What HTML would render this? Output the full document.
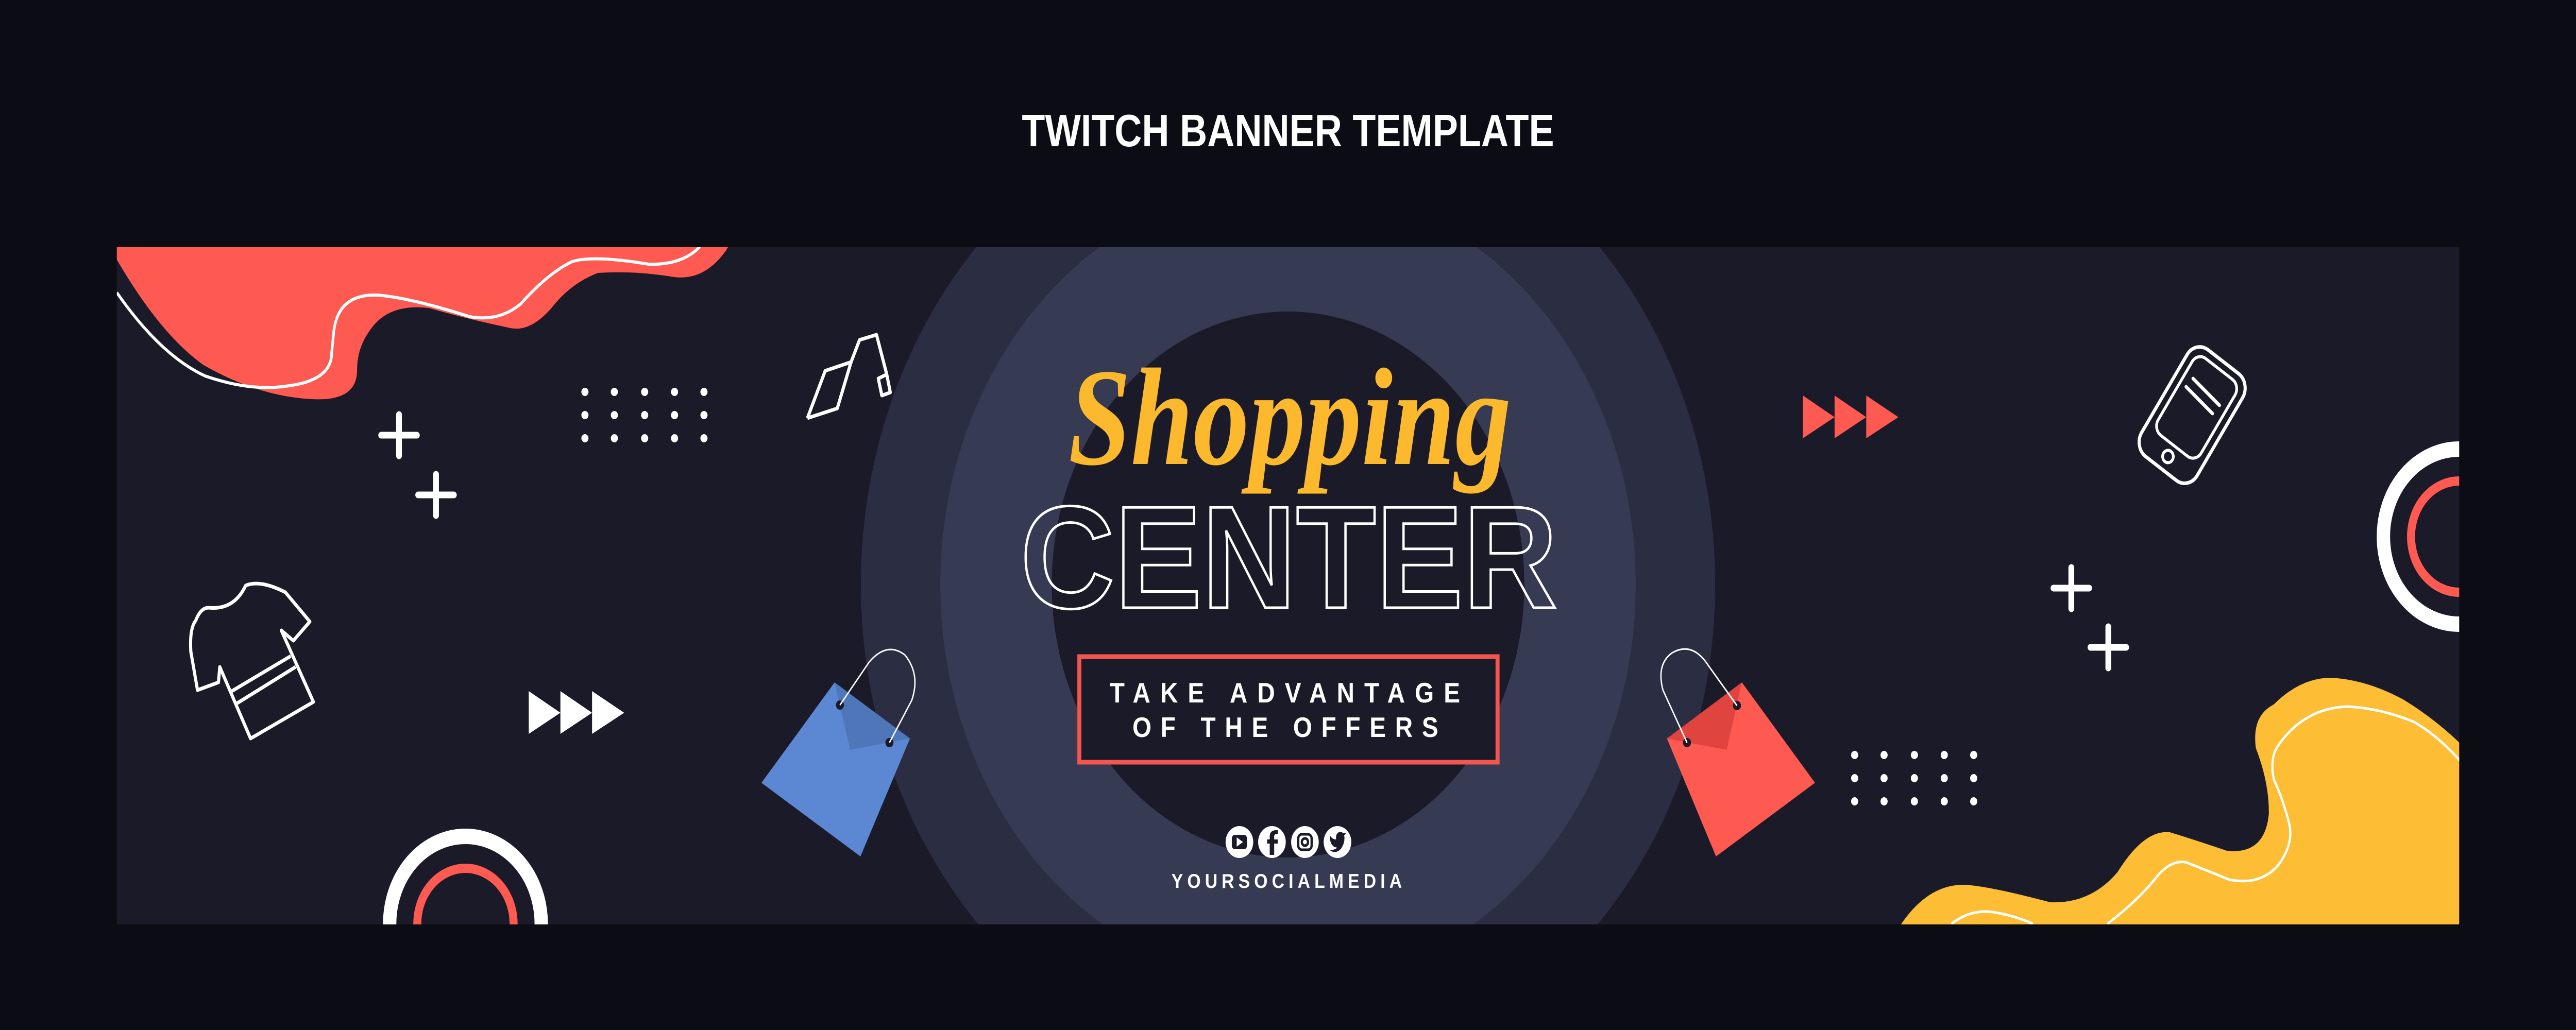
<!DOCTYPE html>
<html><head><meta charset="utf-8"><style>html,body{margin:0;padding:0;background:#0b0c14;overflow:hidden;width:100%;height:100%}svg{display:block;width:100vw;height:100vh}</style></head><body>
<svg viewBox="0 0 5778 2000" preserveAspectRatio="none" xmlns="http://www.w3.org/2000/svg">
<defs><clipPath id="b"><rect x="262" y="480" width="5254" height="1315"/></clipPath></defs>
<rect width="5778" height="2000" fill="#0b0c14"/>
<text x="2889" y="284" text-anchor="middle" font-family="Liberation Sans, sans-serif" font-weight="bold" font-size="88" fill="#fff" textLength="1194" lengthAdjust="spacingAndGlyphs">TWITCH BANNER TEMPLATE</text>
<rect x="262" y="480" width="5254" height="1315" fill="#1b1a28"/>
<g clip-path="url(#b)">
<circle cx="2889" cy="1135" r="958" fill="#2b2e42"/>
<circle cx="2889" cy="1135" r="780" fill="#363a52"/>
<circle cx="2889" cy="1135" r="530" fill="#1b1a28"/>
<path d="M250,470 L1640,470 L1628,487 Q1580,545 1513,538 Q1420,525 1341,530 Q1280,550 1237,598 Q1190,645 1145,637 Q1050,620 962,598 Q880,590 840,630 Q800,670 801,720 Q800,780 700,775 Q580,770 457,709 Q360,650 262,504 Z" fill="#fe5a52"/>
<path d="M262,568 Q360,690 460,730 Q560,760 640,750 Q745,740 744,684 L749,641 Q760,570 847,573 Q920,578 1054,615 Q1120,625 1168,590 Q1230,530 1283,508 Q1330,495 1455,513 Q1530,515 1570,479" fill="none" stroke="#fff" stroke-width="6"/>
<path d="M4260,1800 Q4320,1720 4400,1718 Q4450,1718 4599,1752 Q4690,1755 4750,1693 Q4810,1610 4867,1616 Q4920,1630 4995,1652 Q5080,1660 5089,1581 Q5090,1520 5060,1453 Q5050,1390 5100,1368 Q5160,1316 5229,1316 Q5310,1320 5392,1359 Q5460,1395 5520,1445 L5520,1800 Z" fill="#fdbd35"/>
<path d="M4377,1794 Q4420,1765 4470,1771 Q4520,1778 4560,1794" fill="none" stroke="#fff" stroke-width="5"/>
<path d="M4727,1794 Q4800,1745 4840,1700 Q4870,1670 4902,1674 Q4950,1690 5000,1708 Q5070,1720 5110,1680 Q5145,1640 5135,1600 Q5120,1550 5100,1513 Q5090,1470 5112,1445 Q5170,1375 5264,1372 Q5340,1375 5415,1402 Q5470,1430 5520,1479" fill="none" stroke="#fff" stroke-width="5"/>
<circle cx="1044" cy="1794" r="170" fill="none" stroke="#fff" stroke-width="30"/>
<circle cx="1044" cy="1794" r="108" fill="none" stroke="#fe5a52" stroke-width="18"/>
<circle cx="5516" cy="1042" r="170" fill="none" stroke="#fff" stroke-width="30"/>
<circle cx="5516" cy="1042" r="108" fill="none" stroke="#fe5a52" stroke-width="18"/>
</g>
<g stroke="#fff" stroke-width="13" stroke-linecap="round">
<path d="M855,845h80M895,805v80M938,961h80M978,921v80M4606,1142h80M4646,1102v80M4689,1257h80M4729,1217v80"/>
</g>
<g fill="#fff">
<g id="dg"><circle cx="1312" cy="761" r="8"/><circle cx="1378" cy="761" r="8"/><circle cx="1446" cy="761" r="8"/><circle cx="1513" cy="761" r="8"/><circle cx="1579" cy="761" r="8"/>
<circle cx="1312" cy="806" r="8"/><circle cx="1378" cy="806" r="8"/><circle cx="1446" cy="806" r="8"/><circle cx="1513" cy="806" r="8"/><circle cx="1579" cy="806" r="8"/>
<circle cx="1312" cy="851" r="8"/><circle cx="1378" cy="851" r="8"/><circle cx="1446" cy="851" r="8"/><circle cx="1513" cy="851" r="8"/><circle cx="1579" cy="851" r="8"/></g>
<use href="#dg" transform="translate(2848,705)"/>
</g>
<path d="M1186,1342L1257,1384L1186,1425ZM1257,1342L1328,1384L1257,1425ZM1328,1342L1400,1384L1328,1425Z" fill="#fff"/>
<path d="M4044,768L4115,810L4044,851ZM4115,768L4186,810L4115,851ZM4186,768L4258,810L4186,851Z" fill="#fe5a52"/>
<g fill="none" stroke="#fff" stroke-width="7" stroke-linejoin="round">
<path d="M551,1137Q583,1125 640,1150L695,1207L658,1244L631,1224L703,1363L562,1434L493,1295L490,1325L443,1340L428,1265Q425,1220 439,1205Q450,1180 468,1180Q525,1185 551,1137Z"/>
<path d="M520,1342L652,1274M531,1366L663,1295"/>
<path d="M1811,812L1851,720L1909,703L1928,660L1966,650L1989,727L1970,735L1978,768L1997,762L1989,727M1909,703L1878,793L1811,812"/>
<g transform="translate(4917,806) rotate(34)">
<rect x="-75" y="-125" width="150" height="250" rx="34"/>
<rect x="-58" y="-108" width="116" height="180" rx="22" stroke-width="6"/>
<circle cx="0" cy="97" r="12" stroke-width="6"/>
<path d="M-38,-60L40,-50M-42,-38L36,-28" stroke-linecap="round"/>
</g>
</g>
<path d="M1708,1520L1872,1325L2041,1434L1930,1663Z" fill="#5b87d3"/>
<path d="M1872,1325L2041,1434L1907,1456Z" fill="#4f76b9"/>
<circle cx="1884" cy="1369" r="9" fill="#1b1a28"/><circle cx="1995" cy="1442" r="9" fill="#1b1a28"/>
<path d="M1884,1369L1950,1285Q1990,1245 2030,1272Q2065,1310 2045,1360L1995,1442" fill="none" stroke="#fff" stroke-width="3"/>
<path d="M3739,1434L3907,1325L4071,1520L3849,1663Z" fill="#fe5a52"/>
<path d="M3739,1434L3907,1325L3873,1456Z" fill="#e0443f"/>
<circle cx="3784" cy="1442" r="9" fill="#1b1a28"/><circle cx="3896" cy="1370" r="9" fill="#1b1a28"/>
<path d="M3784,1442L3730,1340Q3715,1290 3750,1268Q3795,1245 3830,1290L3896,1370" fill="none" stroke="#fff" stroke-width="3"/>
<text x="2893" y="901" text-anchor="middle" font-family="Liberation Serif, serif" font-style="italic" font-weight="bold" font-size="270" fill="#fdb92e" textLength="993" lengthAdjust="spacingAndGlyphs">Shopping</text>
<text x="2891" y="1180" text-anchor="middle" font-family="Liberation Sans, sans-serif" font-weight="bold" font-size="283" fill="none" stroke="#fff" stroke-width="5" textLength="1205" lengthAdjust="spacingAndGlyphs">CENTER</text>
<rect x="2421" y="1275" width="938" height="205" fill="#1b1a28" stroke="#f4564f" stroke-width="9"/>
<text x="2882" y="1364" text-anchor="middle" font-family="Liberation Sans, sans-serif" font-weight="bold" font-size="55" fill="#fff" textLength="786" lengthAdjust="spacing">TAKE ADVANTAGE</text>
<text x="2883" y="1431" text-anchor="middle" font-family="Liberation Sans, sans-serif" font-weight="bold" font-size="55" fill="#fff" textLength="686" lengthAdjust="spacing">OF THE OFFERS</text>
<g fill="#fff"><circle cx="2780" cy="1635" r="31"/><circle cx="2853" cy="1635" r="31"/><circle cx="2927" cy="1635" r="31"/><circle cx="3000" cy="1635" r="31"/></g>
<rect x="2763" y="1621" width="34" height="28" rx="7" fill="#1b1a28"/><path d="M2774,1626L2788,1635L2774,1644Z" fill="#fff"/>
<path d="M2858,1660V1638H2866V1630H2858V1624Q2858,1619 2866,1619V1612Q2848,1611 2848,1624V1630H2842V1638H2848V1660" fill="#1b1a28"/>
<rect x="2912" y="1620" width="30" height="30" rx="8" fill="none" stroke="#1b1a28" stroke-width="5"/><circle cx="2927" cy="1635" r="7" fill="none" stroke="#1b1a28" stroke-width="5"/>
<path d="M2983,1628Q2985,1645 3000,1646Q2990,1652 2982,1650Q2995,1660 3008,1648Q3018,1635 3015,1622L3020,1617L3013,1618Q3005,1612 2998,1620Q2996,1625 2997,1630Q2988,1630 2983,1622Z" fill="#1b1a28"/>
<text x="2886" y="1724" text-anchor="middle" font-family="Liberation Sans, sans-serif" font-weight="bold" font-size="39" fill="#fff" textLength="517" lengthAdjust="spacing">YOURSOCIALMEDIA</text>
</svg>
</body></html>
